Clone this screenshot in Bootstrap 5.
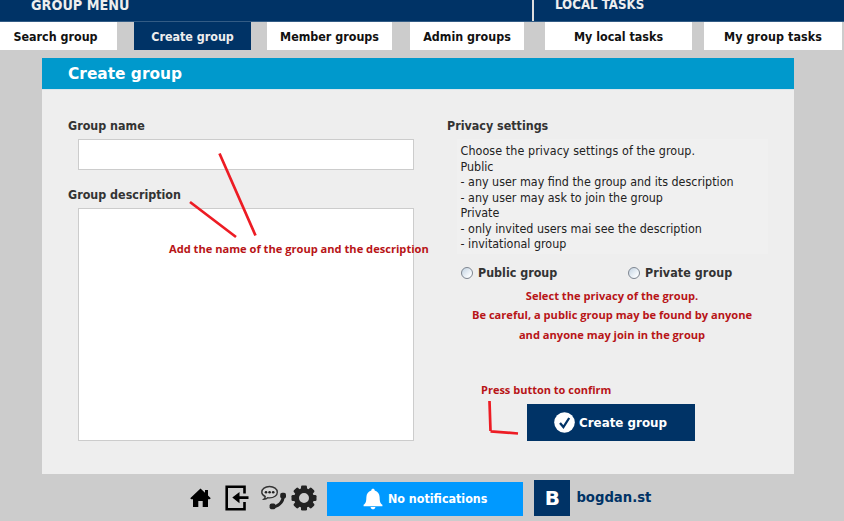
<!DOCTYPE html>
<html lang="en">
<head>
<meta charset="utf-8">
<meta name="viewport" content="width=device-width, initial-scale=1">
<title>Create group</title>
<link href="https://cdn.jsdelivr.net/npm/bootstrap@5.3.0/dist/css/bootstrap.min.css" rel="stylesheet">
<style>
  :root { --navy: #003366; --sky: #0099cc; --note: #b81417; }
  html, body { height: 521px; overflow: hidden; }
  body { background: #ccc; color: #333; font: bold 12.4px/16px "DejaVu Sans Condensed", "DejaVu Sans", sans-serif; }
  .menu-bar { height: 22px; background: var(--navy); color: #eee; font-size: 14.3px; border-bottom: 1px solid #335c85; }
  .menu-bar > div { height: 21px; line-height: 10px; }
  .menu-left { width: 534px; padding-left: 31px; border-right: 2px solid #ddd; }
  .menu-right { padding-left: 21px; font-size: 13.2px; }
  .tabs { display: grid; grid-template-columns: 117px 17px 117px 16px 125px 18px 114px 21px 147px 12px 138px; height: 28px; }
  .tabs a { color: #111; background: #fff; text-decoration: none; text-align: center; line-height: 29px; grid-row: 1; height: 28px; white-space: nowrap; }
  .tabs a:nth-child(1) { grid-column: 1; padding-right: 6px; }
  .tabs a:nth-child(2) { grid-column: 3; background: var(--navy); color: #eee; }
  .tabs a:nth-child(3) { grid-column: 5; }
  .tabs a:nth-child(4) { grid-column: 7; }
  .tabs a:nth-child(5) { grid-column: 9; }
  .tabs a:nth-child(6) { grid-column: 11; letter-spacing: .08px; }
  .panel { width: 752px; height: 416px; margin: 8px 0 0 42px; background: #eee; }
  .panel-title { height: 32px; margin: 0; padding-left: 26px; background: var(--sky); border-bottom: 1px solid #d8e6ec; color: #fff; font: bold 15.4px/33px "DejaVu Sans", sans-serif; }
  .fields { width: 372px; padding: 28px 0 0 26px; }
  .box { width: 336px; margin-left: 10px; background: #fff; border: 1px solid #ccc; border-radius: 0; resize: none; display: block; padding: 4px; }
  .name-box { height: 31px; margin-top: 5px; }
  .desc-box { height: 233px; margin-top: 5px; }
  .desc-label { margin-top: 17px; }
  .privacy { padding: 28px 0 0 33px; width: 380px; }
  .info { width: 311px; height: 115px; margin: 5px 0 0 10px; padding: 4px 0 0 3.5px; background: #f0f0f0; color: #222; font-weight: normal; line-height: 15.5px; white-space: nowrap; }
  .info span { letter-spacing: .09px; }
  .choices { margin: 11px 0 0 14px; height: 16px; }
  .choices label { width: 167px; }
  .choices label + label { letter-spacing: .08px; }
  .choices input { appearance: none; width: 12px; height: 12px; margin: 0 5px 0 0; border: 1px solid #7d8590; border-radius: 50%; background: linear-gradient(135deg, #c3d3e2, #f7fafd 75%); }
  .choices label + label input { margin-right: 5.6px; }
  .note { color: var(--note); font: bold 11.12px/20px "Open Sans", sans-serif; white-space: nowrap; }
  .choice-note { width: 330px; margin: 5px 0 0 0; text-align: center; line-height: 19.4px; }
  .press-note { margin: 36px 0 0 34px; font-size: 11px; }
  .submit { width: 168px; height: 37px; margin: 4px 0 0 80px; background: var(--navy); color: #fff; border: 0; font: bold 11.9px "DejaVu Sans", sans-serif; padding: 0 0 0 27px; gap: 4px; }
  .overlay { position: absolute; left: 0; top: 0; pointer-events: none; }
  .add-note { position: absolute; left: 169px; top: 239px; }
  .foot { height: 47px; }
  .foot svg { flex: none; display: block; }
  .i-home { margin: 14px 0 0 190px; }
  .i-exit { margin: 11px 0 0 14px; }
  .i-talk { margin: 11px 0 0 12px; }
  .i-gear { margin: 11px 0 0 4px; }
  .notif { width: 196px; height: 34px; margin: 8px 0 0 10px; padding: 0 0 0 36px; background: #09f; color: #fff; gap: 5px; }
  .avatar-box { width: 36px; height: 36px; margin: 6px 0 0 11.4px; background: var(--navy); color: #fff; font: bold 20px/36px "DejaVu Sans", sans-serif; text-align: center; }
  .user-name { margin: 14px 0 0 6px; color: var(--navy); font-size: 14.7px; line-height: 18px; }
</style>
<script src="https://cdn.jsdelivr.net/npm/bootstrap@5.3.0/dist/js/bootstrap.bundle.min.js"></script>
</head>
<body>
<header class="menu-bar d-flex">
  <div class="menu-left">GROUP MENU</div>
  <div class="menu-right">LOCAL TASKS</div>
</header>
<nav class="tabs">
  <a href="#">Search group</a>
  <a href="#">Create group</a>
  <a href="#">Member groups</a>
  <a href="#">Admin groups</a>
  <a href="#">My local tasks</a>
  <a href="#">My group tasks</a>
</nav>
<main class="panel">
  <h1 class="panel-title">Create group</h1>
  <form class="d-flex">
    <div class="fields">
      <label class="d-block" for="gname">Group name</label>
      <input class="box name-box" id="gname" type="text">
      <label class="d-block desc-label" for="gdesc">Group description</label>
      <textarea class="box desc-box" id="gdesc"></textarea>
    </div>
    <div class="privacy">
      <div>Privacy settings</div>
      <div class="info"><span>Choose the privacy settings of the group.</span><br>Public<br>- any user may find the group and its description<br>- any user may ask to join the group<br>Private<br>- only invited users mai see the description<br>- invitational group</div>
      <div class="choices d-flex">
        <label class="d-flex align-items-center"><input type="radio" name="privacy">Public group</label>
        <label class="d-flex align-items-center"><input type="radio" name="privacy">Private group</label>
      </div>
      <div class="note choice-note">Select the privacy of the group.<br>Be careful, a public group may be found by anyone<br>and anyone may join in the group</div>
      <div class="note press-note">Press button to confirm</div>
      <button type="button" class="submit d-flex align-items-center">
        <svg width="21" height="21" viewBox="0 0 21 21"><circle cx="10.5" cy="10.5" r="10.3" fill="#fff"/><path d="M6 11l3.4 4L15.2 6" fill="none" stroke="#036" stroke-width="2.3"/></svg>
        <span>Create group</span>
      </button>
    </div>
  </form>
</main>
<footer class="foot d-flex align-items-start">
  <svg class="i-home" width="21" height="20" viewBox="0 0 21 20"><path d="M10.5.5L15 4.700V2h3v5.400l2.800 2.800-1.200 1.100H18V19h-5.300v-6H8.300v6H3v-7.700H1.300L.2 10.200z" fill="#000"/></svg>
  <svg class="i-exit" width="24" height="26" viewBox="0 0 24 26"><path d="M19.500 8.500V1.700H1.700V24.300H19.500V17" fill="none" stroke="#000" stroke-width="2.600"/><path d="M14.500 7V11.200H23.500V14H14.500V18.200L7.300 12.600z" fill="#000"/></svg>
  <svg class="i-talk" width="26" height="26" viewBox="0 0 26 26"><path d="M8.500 1.500c4.400 0 7.800 2.500 7.800 5.700s-3.400 5.700-7.800 5.700q-1 0-1.800-.2Q5.200 14.300 2.800 14.300q1.500-1.300 1.400-2.800C2 10.500.8 9 .8 7.200c0-3.200 3.300-5.700 7.700-5.700z" fill="#d6d6d6" stroke="#333" stroke-width="1.400"/><g fill="#222"><circle cx="5" cy="7.200" r="1.300"/><circle cx="8.600" cy="7.200" r="1.300"/><circle cx="12.200" cy="7.200" r="1.300"/></g><path d="M10.500 22.200C17 22 22.500 17 22.200 10.500" fill="none" stroke="#222" stroke-width="3"/><rect x="19.200" y="7.700" width="5.800" height="5.800" rx="2" fill="#222"/><rect x="8.600" y="18.600" width="6" height="5.600" rx="2" fill="#222"/></svg>
  <svg class="i-gear" width="26" height="26" viewBox="0 0 26 26"><g fill="#222"><path fill-rule="evenodd" d="M13 3a10 10 0 1 1 0 20a10 10 0 1 1 0-20zM13 8a5 5 0 1 0 0 10a5 5 0 1 0 0-10z"/><g id="teeth"><rect x="10" y=".5" width="6" height="5" rx="1.300"/><rect x="10" y="20.500" width="6" height="5" rx="1.300"/><rect x=".5" y="10" width="5" height="6" rx="1.300"/><rect x="20.500" y="10" width="5" height="6" rx="1.300"/></g><use href="#teeth" transform="rotate(45 13 13)"/></g></svg>
  <div class="notif d-flex align-items-center">
    <svg width="20" height="22" viewBox="0 0 20 22"><path d="M10 .8c1 0 1.700.6 1.700 1.600 3.200.8 4.700 3.300 4.900 6.700.2 4.400.4 6.400 2.800 7.700v1.500H.6v-1.500C3 15.500 3.200 13.500 3.400 9.100c.2-3.400 1.700-5.900 4.900-6.700C8.300 1.400 9 .8 10 .8zM7.600 19h4.800c-.2 1.500-1.100 2.200-2.400 2.200S7.800 20.500 7.600 19z" fill="#fff"/></svg>
    <span>No notifications</span>
  </div>
  <div class="avatar-box">B</div>
  <div class="user-name">bogdan.st</div>
</footer>
<svg class="overlay" width="844" height="521" viewBox="0 0 844 521" fill="none" stroke="#ed1c24" stroke-width="2.700"><path d="M219.500 153.500L255.500 235.500M190 202L236 237M489.500 401L490.500 431M490.500 431.300L518 433.500"/></svg>
<div class="note add-note">Add the name of the group and the description</div>
</body>
</html>
